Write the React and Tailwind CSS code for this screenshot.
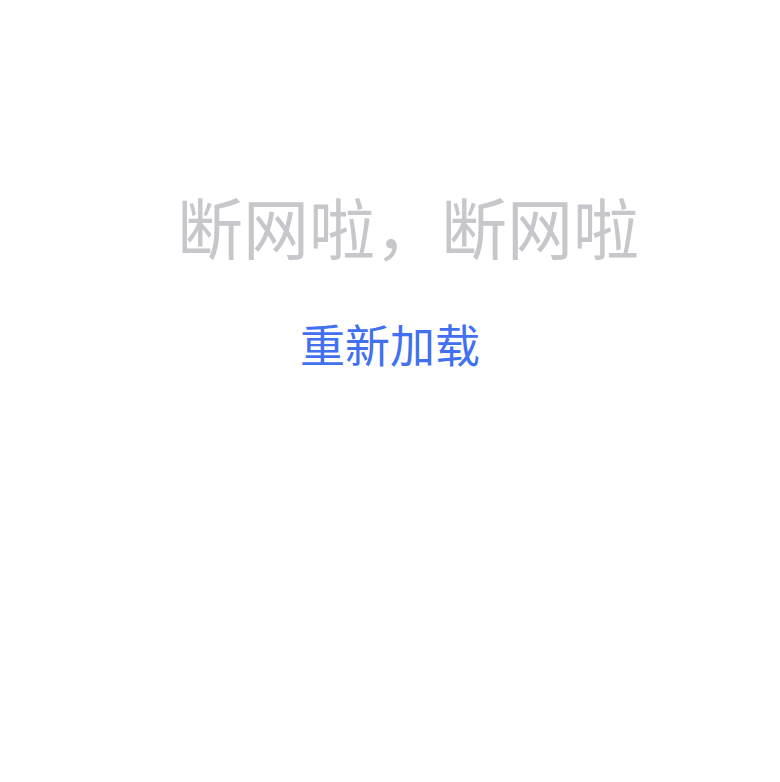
export default function App() {
  return (
    <div className="w-[780px] h-[782px] bg-white flex flex-col items-center" style={{ fontFamily: '"Noto Sans CJK SC", sans-serif' }}>
      <div className="mt-[177px] pl-[36px] text-[66px] leading-[96px] text-[#c6c6cb] whitespace-nowrap">断网啦，断网啦</div>
      <div className="mt-[39px] text-[45px] leading-[64px] text-[#4170f0] whitespace-nowrap">重新加载</div>
    </div>
  );
}
